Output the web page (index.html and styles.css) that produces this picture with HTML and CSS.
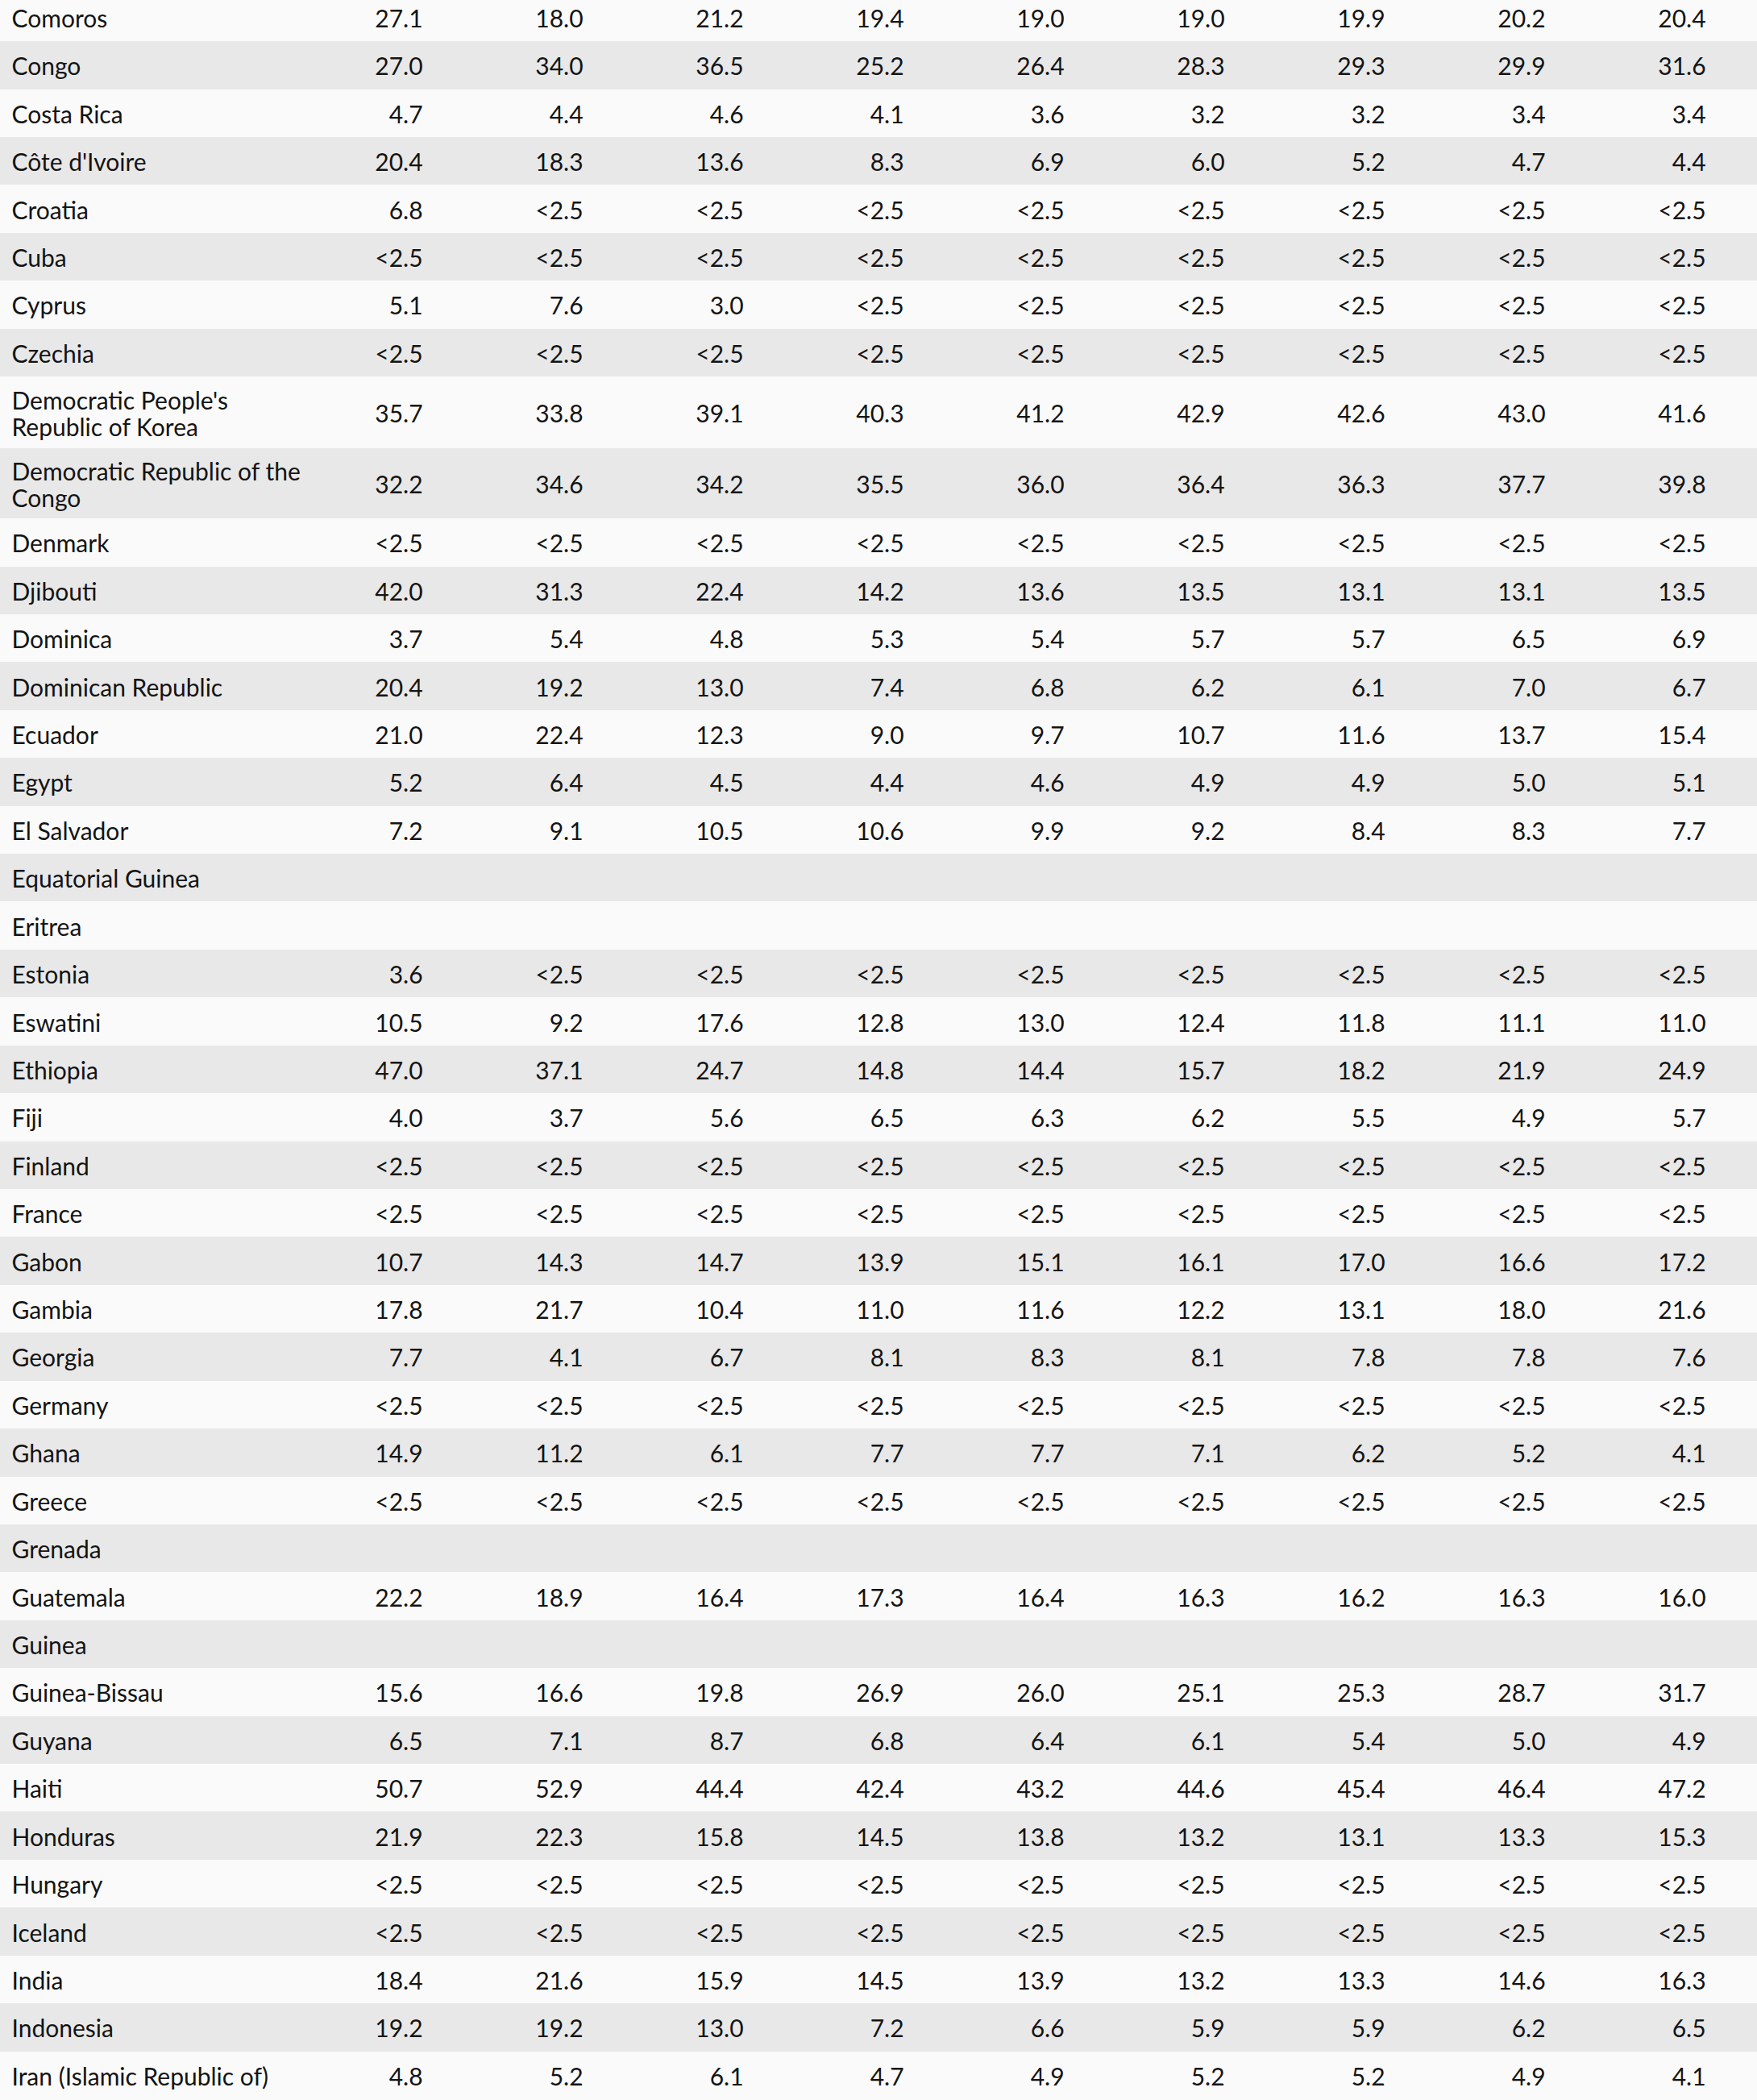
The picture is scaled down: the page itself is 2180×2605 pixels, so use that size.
FILE: index.html
```html
<!DOCTYPE html>
<html lang="en">
<head>
<meta charset="utf-8">
<title>Prevalence table</title>
<link rel="stylesheet" href="styles.css">
</head>
<body>
<div class="table">
<div class="row"><div class="name">Comoros</div><div class="v">27.1</div><div class="v">18.0</div><div class="v">21.2</div><div class="v">19.4</div><div class="v">19.0</div><div class="v">19.0</div><div class="v">19.9</div><div class="v">20.2</div><div class="v">20.4</div></div>
<div class="row"><div class="name">Congo</div><div class="v">27.0</div><div class="v">34.0</div><div class="v">36.5</div><div class="v">25.2</div><div class="v">26.4</div><div class="v">28.3</div><div class="v">29.3</div><div class="v">29.9</div><div class="v">31.6</div></div>
<div class="row"><div class="name">Costa Rica</div><div class="v">4.7</div><div class="v">4.4</div><div class="v">4.6</div><div class="v">4.1</div><div class="v">3.6</div><div class="v">3.2</div><div class="v">3.2</div><div class="v">3.4</div><div class="v">3.4</div></div>
<div class="row"><div class="name">Côte d'Ivoire</div><div class="v">20.4</div><div class="v">18.3</div><div class="v">13.6</div><div class="v">8.3</div><div class="v">6.9</div><div class="v">6.0</div><div class="v">5.2</div><div class="v">4.7</div><div class="v">4.4</div></div>
<div class="row"><div class="name">Croatia</div><div class="v">6.8</div><div class="v">&lt;2.5</div><div class="v">&lt;2.5</div><div class="v">&lt;2.5</div><div class="v">&lt;2.5</div><div class="v">&lt;2.5</div><div class="v">&lt;2.5</div><div class="v">&lt;2.5</div><div class="v">&lt;2.5</div></div>
<div class="row"><div class="name">Cuba</div><div class="v">&lt;2.5</div><div class="v">&lt;2.5</div><div class="v">&lt;2.5</div><div class="v">&lt;2.5</div><div class="v">&lt;2.5</div><div class="v">&lt;2.5</div><div class="v">&lt;2.5</div><div class="v">&lt;2.5</div><div class="v">&lt;2.5</div></div>
<div class="row"><div class="name">Cyprus</div><div class="v">5.1</div><div class="v">7.6</div><div class="v">3.0</div><div class="v">&lt;2.5</div><div class="v">&lt;2.5</div><div class="v">&lt;2.5</div><div class="v">&lt;2.5</div><div class="v">&lt;2.5</div><div class="v">&lt;2.5</div></div>
<div class="row"><div class="name">Czechia</div><div class="v">&lt;2.5</div><div class="v">&lt;2.5</div><div class="v">&lt;2.5</div><div class="v">&lt;2.5</div><div class="v">&lt;2.5</div><div class="v">&lt;2.5</div><div class="v">&lt;2.5</div><div class="v">&lt;2.5</div><div class="v">&lt;2.5</div></div>
<div class="row tall"><div class="name">Democratic People's<br>Republic of Korea</div><div class="v">35.7</div><div class="v">33.8</div><div class="v">39.1</div><div class="v">40.3</div><div class="v">41.2</div><div class="v">42.9</div><div class="v">42.6</div><div class="v">43.0</div><div class="v">41.6</div></div>
<div class="row tall short"><div class="name">Democratic Republic of the<br>Congo</div><div class="v">32.2</div><div class="v">34.6</div><div class="v">34.2</div><div class="v">35.5</div><div class="v">36.0</div><div class="v">36.4</div><div class="v">36.3</div><div class="v">37.7</div><div class="v">39.8</div></div>
<div class="row"><div class="name">Denmark</div><div class="v">&lt;2.5</div><div class="v">&lt;2.5</div><div class="v">&lt;2.5</div><div class="v">&lt;2.5</div><div class="v">&lt;2.5</div><div class="v">&lt;2.5</div><div class="v">&lt;2.5</div><div class="v">&lt;2.5</div><div class="v">&lt;2.5</div></div>
<div class="row"><div class="name">Djibouti</div><div class="v">42.0</div><div class="v">31.3</div><div class="v">22.4</div><div class="v">14.2</div><div class="v">13.6</div><div class="v">13.5</div><div class="v">13.1</div><div class="v">13.1</div><div class="v">13.5</div></div>
<div class="row"><div class="name">Dominica</div><div class="v">3.7</div><div class="v">5.4</div><div class="v">4.8</div><div class="v">5.3</div><div class="v">5.4</div><div class="v">5.7</div><div class="v">5.7</div><div class="v">6.5</div><div class="v">6.9</div></div>
<div class="row"><div class="name">Dominican Republic</div><div class="v">20.4</div><div class="v">19.2</div><div class="v">13.0</div><div class="v">7.4</div><div class="v">6.8</div><div class="v">6.2</div><div class="v">6.1</div><div class="v">7.0</div><div class="v">6.7</div></div>
<div class="row"><div class="name">Ecuador</div><div class="v">21.0</div><div class="v">22.4</div><div class="v">12.3</div><div class="v">9.0</div><div class="v">9.7</div><div class="v">10.7</div><div class="v">11.6</div><div class="v">13.7</div><div class="v">15.4</div></div>
<div class="row"><div class="name">Egypt</div><div class="v">5.2</div><div class="v">6.4</div><div class="v">4.5</div><div class="v">4.4</div><div class="v">4.6</div><div class="v">4.9</div><div class="v">4.9</div><div class="v">5.0</div><div class="v">5.1</div></div>
<div class="row"><div class="name">El Salvador</div><div class="v">7.2</div><div class="v">9.1</div><div class="v">10.5</div><div class="v">10.6</div><div class="v">9.9</div><div class="v">9.2</div><div class="v">8.4</div><div class="v">8.3</div><div class="v">7.7</div></div>
<div class="row"><div class="name">Equatorial Guinea</div><div class="v"></div><div class="v"></div><div class="v"></div><div class="v"></div><div class="v"></div><div class="v"></div><div class="v"></div><div class="v"></div><div class="v"></div></div>
<div class="row"><div class="name">Eritrea</div><div class="v"></div><div class="v"></div><div class="v"></div><div class="v"></div><div class="v"></div><div class="v"></div><div class="v"></div><div class="v"></div><div class="v"></div></div>
<div class="row"><div class="name">Estonia</div><div class="v">3.6</div><div class="v">&lt;2.5</div><div class="v">&lt;2.5</div><div class="v">&lt;2.5</div><div class="v">&lt;2.5</div><div class="v">&lt;2.5</div><div class="v">&lt;2.5</div><div class="v">&lt;2.5</div><div class="v">&lt;2.5</div></div>
<div class="row"><div class="name">Eswatini</div><div class="v">10.5</div><div class="v">9.2</div><div class="v">17.6</div><div class="v">12.8</div><div class="v">13.0</div><div class="v">12.4</div><div class="v">11.8</div><div class="v">11.1</div><div class="v">11.0</div></div>
<div class="row"><div class="name">Ethiopia</div><div class="v">47.0</div><div class="v">37.1</div><div class="v">24.7</div><div class="v">14.8</div><div class="v">14.4</div><div class="v">15.7</div><div class="v">18.2</div><div class="v">21.9</div><div class="v">24.9</div></div>
<div class="row"><div class="name">Fiji</div><div class="v">4.0</div><div class="v">3.7</div><div class="v">5.6</div><div class="v">6.5</div><div class="v">6.3</div><div class="v">6.2</div><div class="v">5.5</div><div class="v">4.9</div><div class="v">5.7</div></div>
<div class="row"><div class="name">Finland</div><div class="v">&lt;2.5</div><div class="v">&lt;2.5</div><div class="v">&lt;2.5</div><div class="v">&lt;2.5</div><div class="v">&lt;2.5</div><div class="v">&lt;2.5</div><div class="v">&lt;2.5</div><div class="v">&lt;2.5</div><div class="v">&lt;2.5</div></div>
<div class="row"><div class="name">France</div><div class="v">&lt;2.5</div><div class="v">&lt;2.5</div><div class="v">&lt;2.5</div><div class="v">&lt;2.5</div><div class="v">&lt;2.5</div><div class="v">&lt;2.5</div><div class="v">&lt;2.5</div><div class="v">&lt;2.5</div><div class="v">&lt;2.5</div></div>
<div class="row"><div class="name">Gabon</div><div class="v">10.7</div><div class="v">14.3</div><div class="v">14.7</div><div class="v">13.9</div><div class="v">15.1</div><div class="v">16.1</div><div class="v">17.0</div><div class="v">16.6</div><div class="v">17.2</div></div>
<div class="row"><div class="name">Gambia</div><div class="v">17.8</div><div class="v">21.7</div><div class="v">10.4</div><div class="v">11.0</div><div class="v">11.6</div><div class="v">12.2</div><div class="v">13.1</div><div class="v">18.0</div><div class="v">21.6</div></div>
<div class="row"><div class="name">Georgia</div><div class="v">7.7</div><div class="v">4.1</div><div class="v">6.7</div><div class="v">8.1</div><div class="v">8.3</div><div class="v">8.1</div><div class="v">7.8</div><div class="v">7.8</div><div class="v">7.6</div></div>
<div class="row"><div class="name">Germany</div><div class="v">&lt;2.5</div><div class="v">&lt;2.5</div><div class="v">&lt;2.5</div><div class="v">&lt;2.5</div><div class="v">&lt;2.5</div><div class="v">&lt;2.5</div><div class="v">&lt;2.5</div><div class="v">&lt;2.5</div><div class="v">&lt;2.5</div></div>
<div class="row"><div class="name">Ghana</div><div class="v">14.9</div><div class="v">11.2</div><div class="v">6.1</div><div class="v">7.7</div><div class="v">7.7</div><div class="v">7.1</div><div class="v">6.2</div><div class="v">5.2</div><div class="v">4.1</div></div>
<div class="row"><div class="name">Greece</div><div class="v">&lt;2.5</div><div class="v">&lt;2.5</div><div class="v">&lt;2.5</div><div class="v">&lt;2.5</div><div class="v">&lt;2.5</div><div class="v">&lt;2.5</div><div class="v">&lt;2.5</div><div class="v">&lt;2.5</div><div class="v">&lt;2.5</div></div>
<div class="row"><div class="name">Grenada</div><div class="v"></div><div class="v"></div><div class="v"></div><div class="v"></div><div class="v"></div><div class="v"></div><div class="v"></div><div class="v"></div><div class="v"></div></div>
<div class="row"><div class="name">Guatemala</div><div class="v">22.2</div><div class="v">18.9</div><div class="v">16.4</div><div class="v">17.3</div><div class="v">16.4</div><div class="v">16.3</div><div class="v">16.2</div><div class="v">16.3</div><div class="v">16.0</div></div>
<div class="row"><div class="name">Guinea</div><div class="v"></div><div class="v"></div><div class="v"></div><div class="v"></div><div class="v"></div><div class="v"></div><div class="v"></div><div class="v"></div><div class="v"></div></div>
<div class="row"><div class="name">Guinea-Bissau</div><div class="v">15.6</div><div class="v">16.6</div><div class="v">19.8</div><div class="v">26.9</div><div class="v">26.0</div><div class="v">25.1</div><div class="v">25.3</div><div class="v">28.7</div><div class="v">31.7</div></div>
<div class="row"><div class="name">Guyana</div><div class="v">6.5</div><div class="v">7.1</div><div class="v">8.7</div><div class="v">6.8</div><div class="v">6.4</div><div class="v">6.1</div><div class="v">5.4</div><div class="v">5.0</div><div class="v">4.9</div></div>
<div class="row"><div class="name">Haiti</div><div class="v">50.7</div><div class="v">52.9</div><div class="v">44.4</div><div class="v">42.4</div><div class="v">43.2</div><div class="v">44.6</div><div class="v">45.4</div><div class="v">46.4</div><div class="v">47.2</div></div>
<div class="row"><div class="name">Honduras</div><div class="v">21.9</div><div class="v">22.3</div><div class="v">15.8</div><div class="v">14.5</div><div class="v">13.8</div><div class="v">13.2</div><div class="v">13.1</div><div class="v">13.3</div><div class="v">15.3</div></div>
<div class="row"><div class="name">Hungary</div><div class="v">&lt;2.5</div><div class="v">&lt;2.5</div><div class="v">&lt;2.5</div><div class="v">&lt;2.5</div><div class="v">&lt;2.5</div><div class="v">&lt;2.5</div><div class="v">&lt;2.5</div><div class="v">&lt;2.5</div><div class="v">&lt;2.5</div></div>
<div class="row"><div class="name">Iceland</div><div class="v">&lt;2.5</div><div class="v">&lt;2.5</div><div class="v">&lt;2.5</div><div class="v">&lt;2.5</div><div class="v">&lt;2.5</div><div class="v">&lt;2.5</div><div class="v">&lt;2.5</div><div class="v">&lt;2.5</div><div class="v">&lt;2.5</div></div>
<div class="row"><div class="name">India</div><div class="v">18.4</div><div class="v">21.6</div><div class="v">15.9</div><div class="v">14.5</div><div class="v">13.9</div><div class="v">13.2</div><div class="v">13.3</div><div class="v">14.6</div><div class="v">16.3</div></div>
<div class="row"><div class="name">Indonesia</div><div class="v">19.2</div><div class="v">19.2</div><div class="v">13.0</div><div class="v">7.2</div><div class="v">6.6</div><div class="v">5.9</div><div class="v">5.9</div><div class="v">6.2</div><div class="v">6.5</div></div>
<div class="row"><div class="name">Iran (Islamic Republic of)</div><div class="v">4.8</div><div class="v">5.2</div><div class="v">6.1</div><div class="v">4.7</div><div class="v">4.9</div><div class="v">5.2</div><div class="v">5.2</div><div class="v">4.9</div><div class="v">4.1</div></div>
</div>
</body>
</html>
```
FILE: styles.css
```css
html, body {
  margin: 0;
  padding: 0;
  background: #fafafa;
}

body {
  overflow: hidden;
}

.table {
  margin-top: -8.3px;
  font-family: "Lato", "Liberation Sans", sans-serif;
  font-size: 30px;
  line-height: 33px;
  color: #141414;
}

.row {
  display: grid;
  grid-template-columns: 325.6px repeat(9, 199px);
  align-items: center;
  box-sizing: border-box;
  height: 59.43px;
  padding: 2px 63.4px 0 0;
  background: #fafafa;
}

.row:nth-child(even) {
  background: #e8e8e8;
}

.row.tall {
  height: 89px;
}

.row.tall.short {
  height: 87px;
}

.name {
  padding-left: 14.5px;
  white-space: nowrap;
}

.v {
  text-align: right;
  white-space: nowrap;
}
```
